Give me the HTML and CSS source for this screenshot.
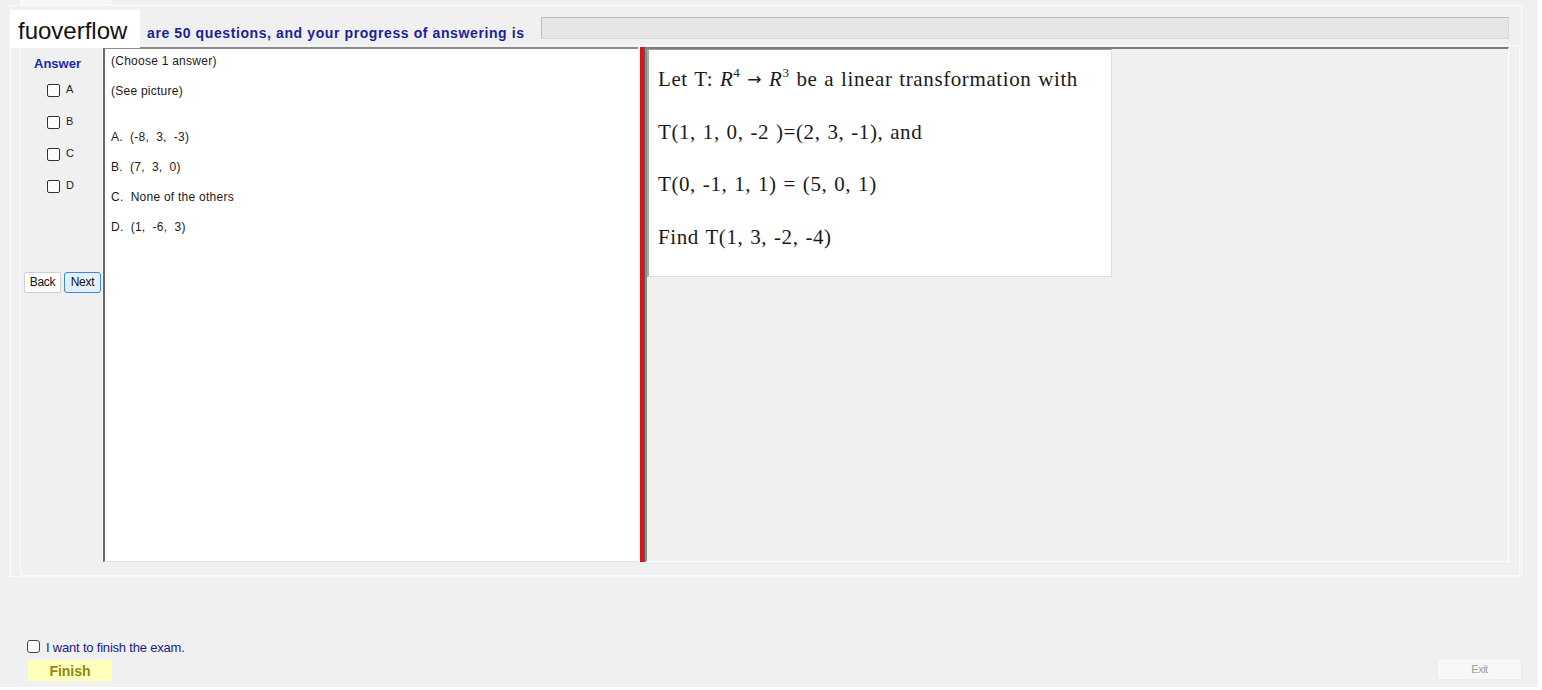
FILE: index.html
```html
<!DOCTYPE html>
<html>
<head>
<meta charset="utf-8">
<link rel="stylesheet" href="styles.css">
</head>
<body>
<div class="window">
  <div class="tabstrip"><div class="tab"></div></div>
  <div class="outer">
    <div class="header">
      <div class="title">are 50 questions, and your progress of answering is</div>
      <div class="progress"></div>
    </div>
    <div class="main">
      <div class="answers">
        <div class="ans-title">Answer</div>
        <div class="opt"><span class="box"></span><span class="lbl">A</span></div>
        <div class="opt"><span class="box"></span><span class="lbl">B</span></div>
        <div class="opt"><span class="box"></span><span class="lbl">C</span></div>
        <div class="opt"><span class="box"></span><span class="lbl">D</span></div>
        <div class="nav">
          <div class="btn back">Back</div>
          <div class="btn next">Next</div>
        </div>
      </div>
      <div class="textbox">
        <div class="line">(Choose 1 answer)</div>
        <div class="line">(See picture)</div>
        <div class="spacer"></div>
        <div class="line">A.&nbsp; (-8,&nbsp; 3,&nbsp; -3)</div>
        <div class="line">B.&nbsp; (7,&nbsp; 3,&nbsp; 0)</div>
        <div class="line">C.&nbsp; None of the others</div>
        <div class="line">D.&nbsp; (1,&nbsp; -6,&nbsp; 3)</div>
      </div>
      <div class="splitter"></div>
      <div class="picpanel">
        <div class="picture">
          <div class="pl">Let T: <i>R</i><sup>4</sup> <span class="arrow">→</span> <i>R</i><sup>3</sup> be a linear transformation with</div>
          <div class="pl">T(1, 1, 0, -2 )=(2, 3, -1), and</div>
          <div class="pl">T(0, -1, 1, 1) = (5, 0, 1)</div>
          <div class="pl">Find T(1, 3, -2, -4)</div>
        </div>
      </div>
    </div>
  </div>
  <div class="footer">
    <div class="finish-group">
      <div class="confirm"><span class="box"></span><span class="confirm-text">I want to finish the exam.</span></div>
      <div class="finish">Finish</div>
    </div>
    <div class="exit">Exit</div>
  </div>
  <div class="watermark">fuoverflow</div>
</div>
</body>
</html>
```

FILE: styles.css
```css
html, body {
  margin: 0;
  padding: 0;
  background: #ffffff;
}
body {
  width: 1542px;
  height: 690px;
  overflow: hidden;
  font-family: "Liberation Sans", Arial, sans-serif;
}
.window {
  position: relative;
  width: 1538px;
  height: 687px;
  background: #f0f0f0;
  display: flex;
  flex-direction: column;
}
.tabstrip {
  height: 5px;
  padding-left: 20px;
}
.tab {
  width: 90px;
  height: 4px;
  background: #f7f7f7;
  border: 1px solid #fcfcfc;
  border-top: none;
}
.outer {
  margin-left: 10px;
  width: 1512px;
  height: 572px;
  box-sizing: border-box;
  border: 1px solid #fbfbfb;
  padding: 9px 1px 0 9px;
  display: flex;
  flex-direction: column;
}
.header {
  height: 30px;
  display: flex;
  align-items: flex-start;
  padding-right: 11px;
}
.title {
  margin-left: 127px;
  margin-top: 10px;
  line-height: 16px;
  font-size: 14px;
  letter-spacing: 0.6px;
  font-weight: bold;
  color: #1a1f9c;
  white-space: nowrap;
}
.progress {
  flex: 1;
  margin-left: 16px;
  margin-top: 2px;
  height: 22px;
  box-sizing: border-box;
  background: #e6e6e6;
  border: 1px solid #bdbdbd;
  border-right-color: #d9d9d9;
  border-bottom-color: #d9d9d9;
}
.main {
  height: 531px;
  box-sizing: border-box;
  border: 1px solid #fafafa;
  padding: 1px 10px 13px 0;
  display: flex;
}
.answers {
  width: 82px;
  display: flex;
  flex-direction: column;
}
.ans-title {
  padding-top: 7px;
  line-height: 19px;
  height: 19px;
  margin-bottom: 1px;
  font-size: 13px;
  font-weight: bold;
  color: #1a2aa8;
  padding-left: 13px;
}
.opt {
  height: 32px;
  display: flex;
  align-items: center;
  padding-left: 26px;
}
.box {
  display: inline-block;
  width: 13px;
  height: 13px;
  box-sizing: border-box;
  border: 1px solid #333333;
  border-radius: 2px;
  background: #ffffff;
}
.lbl {
  margin-left: 6px;
  font-size: 11px;
  color: #222222;
  margin-top: -3px;
}
.nav {
  margin-top: 70px;
  padding-left: 3px;
  display: flex;
  gap: 3px;
}
.btn {
  width: 37px;
  height: 21px;
  box-sizing: border-box;
  font-size: 12px;
  line-height: 19px;
  text-align: center;
  color: #111111;
  border-radius: 2px;
  letter-spacing: -0.3px;
}
.back {
  background: #fdfdfd;
  border: 1px solid #d0d0d0;
}
.next {
  background: #e3f0fb;
  border: 1px solid #3c8ad8;
  border-radius: 3px;
}
.textbox {
  width: 535px;
  box-sizing: border-box;
  background: #ffffff;
  border-top: 2px solid #8a8a8a;
  border-left: 2px solid #6a6a6a;
  border-bottom: 1px solid #e3e3e3;
  padding: 4px 0 0 6px;
  font-size: 12px;
  color: #1a1a1a;
}
.line {
  line-height: 16px;
  height: 16px;
  margin-bottom: 14px;
  letter-spacing: 0.25px;
  white-space: nowrap;
}
.spacer {
  height: 16px;
}
.splitter {
  width: 7px;
  box-sizing: border-box;
  border-left: 2px solid #f4f4f4;
  border-right: 1px solid #5a5a5a;
  background: #e11212;
}
.picpanel {
  flex: 1;
  box-sizing: border-box;
  border-top: 2px solid #7c7c7c;
  border-left: 2px solid #8a8a8a;
  border-right: 1px solid #ffffff;
  border-bottom: 1px solid #ffffff;
  background: #f0f0f0;
  display: flex;
  align-items: flex-start;
}
.picture {
  width: 465px;
  box-sizing: border-box;
  background: #ffffff;
  border-top: 1px solid #9a9a9a;
  border-left: 2px solid #a8a8a8;
  border-right: 1px solid #dedede;
  border-bottom: 1px solid #dedede;
  padding: 3px 0 13px 9px;
  font-family: "Liberation Serif", "Times New Roman", serif;
  font-size: 21px;
  color: #1a1a1a;
}
.pl {
  height: 52.5px;
  line-height: 52.5px;
  white-space: nowrap;
  letter-spacing: 0.6px;
  word-spacing: 1px;
}
.pl sup {
  font-size: 13px;
  line-height: 0;
  vertical-align: 9px;
}
.arrow {
  font-family: "DejaVu Sans", sans-serif;
  font-size: 17px;
  vertical-align: 1px;
}
.footer {
  margin-top: 62px;
  display: flex;
  justify-content: space-between;
  align-items: flex-end;
  padding-left: 27px;
  padding-right: 16px;
}
.finish-group {
  display: flex;
  flex-direction: column;
}
.confirm {
  display: flex;
  align-items: center;
  height: 16px;
  margin-top: -1px;
}
.confirm .box {
  border-color: #444444;
  border-radius: 3px;
}
.confirm-text {
  margin-left: 6px;
  margin-top: 3px;
  font-size: 13px;
  color: #1a1a8a;
  letter-spacing: -0.2px;
}
.finish {
  margin-top: 6px;
  margin-left: 1px;
  width: 84px;
  height: 21px;
  background: #ffffbc;
  color: #8a8a14;
  font-size: 14px;
  font-weight: bold;
  line-height: 22px;
  text-align: center;
}
.exit {
  width: 85px;
  height: 22px;
  box-sizing: border-box;
  background: #f8f8f8;
  border: 1px solid #ececec;
  color: #a0a0a0;
  font-size: 11px;
  line-height: 20px;
  text-align: center;
  letter-spacing: -0.5px;
  margin-bottom: 1px;
}
.watermark {
  position: absolute;
  left: 10px;
  top: 10px;
  width: 130px;
  height: 38px;
  background: #ffffff;
  box-sizing: border-box;
  padding-left: 8px;
  font-size: 24px;
  line-height: 42px;
  color: #111111;
}
```
